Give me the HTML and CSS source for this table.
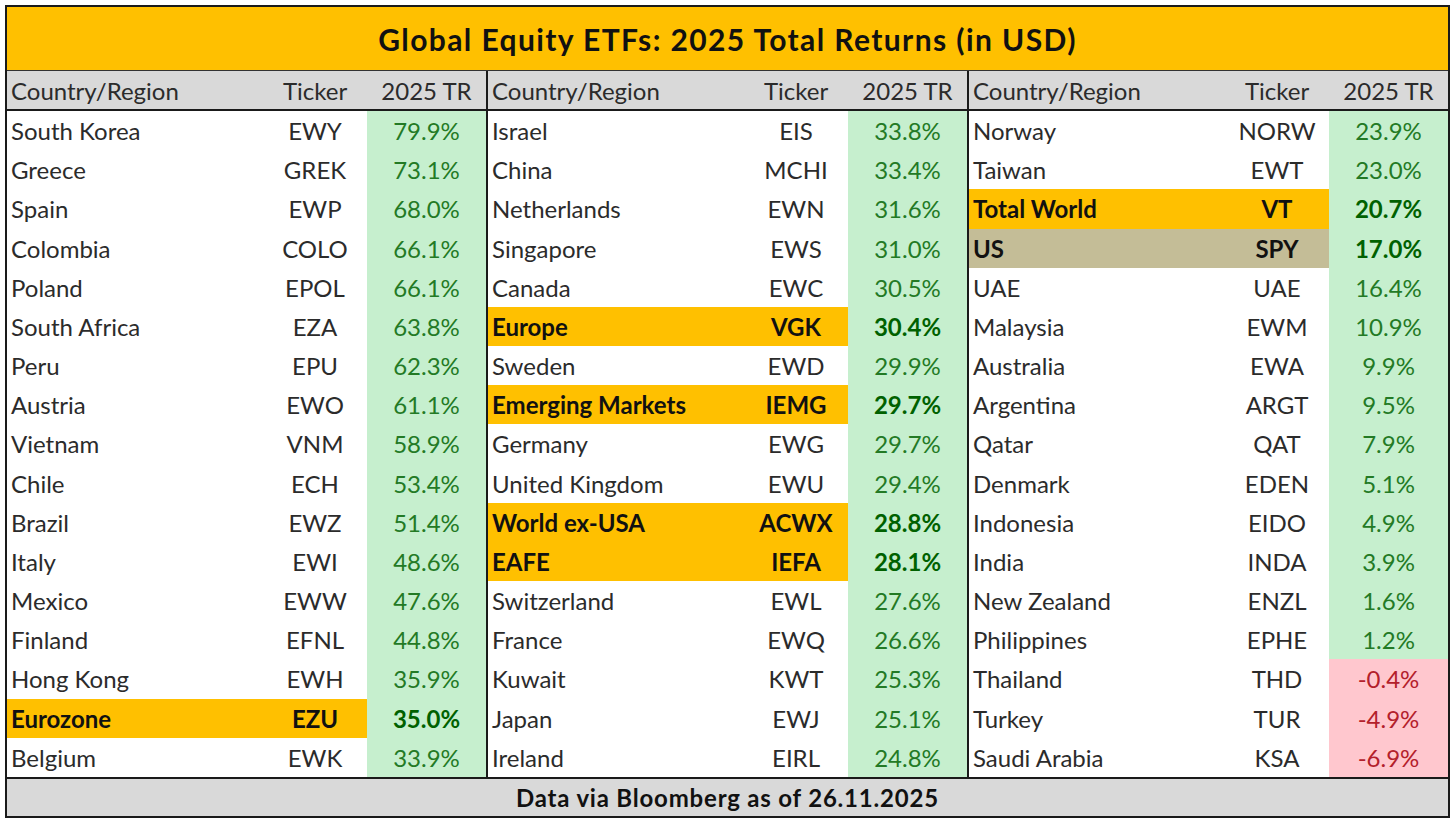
FILE: index.html
```html
<!DOCTYPE html>
<html>
<head>
<meta charset="utf-8">
<link rel="stylesheet" href="styles.css">
</head>
<body>
<div class="sheet">
  <div class="title">Global Equity ETFs: 2025 Total Returns (in USD)</div>
  <div class="cols">
    <div class="col">
      <div class="row head"><span class="name">Country/Region</span><span class="tic">Ticker</span><span class="tr">2025 TR</span></div>
      <div class="row"><span class="name">South Korea</span><span class="tic">EWY</span><span class="tr">79.9%</span></div>
      <div class="row"><span class="name">Greece</span><span class="tic">GREK</span><span class="tr">73.1%</span></div>
      <div class="row"><span class="name">Spain</span><span class="tic">EWP</span><span class="tr">68.0%</span></div>
      <div class="row"><span class="name">Colombia</span><span class="tic">COLO</span><span class="tr">66.1%</span></div>
      <div class="row"><span class="name">Poland</span><span class="tic">EPOL</span><span class="tr">66.1%</span></div>
      <div class="row"><span class="name">South Africa</span><span class="tic">EZA</span><span class="tr">63.8%</span></div>
      <div class="row"><span class="name">Peru</span><span class="tic">EPU</span><span class="tr">62.3%</span></div>
      <div class="row"><span class="name">Austria</span><span class="tic">EWO</span><span class="tr">61.1%</span></div>
      <div class="row"><span class="name">Vietnam</span><span class="tic">VNM</span><span class="tr">58.9%</span></div>
      <div class="row"><span class="name">Chile</span><span class="tic">ECH</span><span class="tr">53.4%</span></div>
      <div class="row"><span class="name">Brazil</span><span class="tic">EWZ</span><span class="tr">51.4%</span></div>
      <div class="row"><span class="name">Italy</span><span class="tic">EWI</span><span class="tr">48.6%</span></div>
      <div class="row"><span class="name">Mexico</span><span class="tic">EWW</span><span class="tr">47.6%</span></div>
      <div class="row"><span class="name">Finland</span><span class="tic">EFNL</span><span class="tr">44.8%</span></div>
      <div class="row"><span class="name">Hong Kong</span><span class="tic">EWH</span><span class="tr">35.9%</span></div>
      <div class="row hl"><span class="name">Eurozone</span><span class="tic">EZU</span><span class="tr">35.0%</span></div>
      <div class="row"><span class="name">Belgium</span><span class="tic">EWK</span><span class="tr">33.9%</span></div>
    </div>
    <div class="col">
      <div class="row head"><span class="name">Country/Region</span><span class="tic">Ticker</span><span class="tr">2025 TR</span></div>
      <div class="row"><span class="name">Israel</span><span class="tic">EIS</span><span class="tr">33.8%</span></div>
      <div class="row"><span class="name">China</span><span class="tic">MCHI</span><span class="tr">33.4%</span></div>
      <div class="row"><span class="name">Netherlands</span><span class="tic">EWN</span><span class="tr">31.6%</span></div>
      <div class="row"><span class="name">Singapore</span><span class="tic">EWS</span><span class="tr">31.0%</span></div>
      <div class="row"><span class="name">Canada</span><span class="tic">EWC</span><span class="tr">30.5%</span></div>
      <div class="row hl"><span class="name">Europe</span><span class="tic">VGK</span><span class="tr">30.4%</span></div>
      <div class="row"><span class="name">Sweden</span><span class="tic">EWD</span><span class="tr">29.9%</span></div>
      <div class="row hl"><span class="name">Emerging Markets</span><span class="tic">IEMG</span><span class="tr">29.7%</span></div>
      <div class="row"><span class="name">Germany</span><span class="tic">EWG</span><span class="tr">29.7%</span></div>
      <div class="row"><span class="name">United Kingdom</span><span class="tic">EWU</span><span class="tr">29.4%</span></div>
      <div class="row hl"><span class="name">World ex-USA</span><span class="tic">ACWX</span><span class="tr">28.8%</span></div>
      <div class="row hl"><span class="name">EAFE</span><span class="tic">IEFA</span><span class="tr">28.1%</span></div>
      <div class="row"><span class="name">Switzerland</span><span class="tic">EWL</span><span class="tr">27.6%</span></div>
      <div class="row"><span class="name">France</span><span class="tic">EWQ</span><span class="tr">26.6%</span></div>
      <div class="row"><span class="name">Kuwait</span><span class="tic">KWT</span><span class="tr">25.3%</span></div>
      <div class="row"><span class="name">Japan</span><span class="tic">EWJ</span><span class="tr">25.1%</span></div>
      <div class="row"><span class="name">Ireland</span><span class="tic">EIRL</span><span class="tr">24.8%</span></div>
    </div>
    <div class="col">
      <div class="row head"><span class="name">Country/Region</span><span class="tic">Ticker</span><span class="tr">2025 TR</span></div>
      <div class="row"><span class="name">Norway</span><span class="tic">NORW</span><span class="tr">23.9%</span></div>
      <div class="row"><span class="name">Taiwan</span><span class="tic">EWT</span><span class="tr">23.0%</span></div>
      <div class="row hl"><span class="name">Total World</span><span class="tic">VT</span><span class="tr">20.7%</span></div>
      <div class="row hl tan"><span class="name">US</span><span class="tic">SPY</span><span class="tr">17.0%</span></div>
      <div class="row"><span class="name">UAE</span><span class="tic">UAE</span><span class="tr">16.4%</span></div>
      <div class="row"><span class="name">Malaysia</span><span class="tic">EWM</span><span class="tr">10.9%</span></div>
      <div class="row"><span class="name">Australia</span><span class="tic">EWA</span><span class="tr">9.9%</span></div>
      <div class="row"><span class="name">Argentina</span><span class="tic">ARGT</span><span class="tr">9.5%</span></div>
      <div class="row"><span class="name">Qatar</span><span class="tic">QAT</span><span class="tr">7.9%</span></div>
      <div class="row"><span class="name">Denmark</span><span class="tic">EDEN</span><span class="tr">5.1%</span></div>
      <div class="row"><span class="name">Indonesia</span><span class="tic">EIDO</span><span class="tr">4.9%</span></div>
      <div class="row"><span class="name">India</span><span class="tic">INDA</span><span class="tr">3.9%</span></div>
      <div class="row"><span class="name">New Zealand</span><span class="tic">ENZL</span><span class="tr">1.6%</span></div>
      <div class="row"><span class="name">Philippines</span><span class="tic">EPHE</span><span class="tr">1.2%</span></div>
      <div class="row neg"><span class="name">Thailand</span><span class="tic">THD</span><span class="tr">-0.4%</span></div>
      <div class="row neg"><span class="name">Turkey</span><span class="tic">TUR</span><span class="tr">-4.9%</span></div>
      <div class="row neg"><span class="name">Saudi Arabia</span><span class="tic">KSA</span><span class="tr">-6.9%</span></div>
    </div>
  </div>
  <div class="footer">Data via Bloomberg as of 26.11.2025</div>
</div>
</body>
</html>
```
FILE: styles.css
```css
html, body {
  margin: 0;
  padding: 0;
  background: #ffffff;
}
body {
  font-family: Lato, "Open Sans", sans-serif;
  color: #2b2b2b;
}
.sheet {
  margin: 5px 0 0 5px;
  width: 1445px;
  height: 813px;
  box-sizing: border-box;
  border: 2px solid #1a1a1a;
  display: flex;
  flex-direction: column;
}
.title {
  height: 63px;
  flex: none;
  background: #ffc000;
  border-bottom: 1px solid #333;
  display: flex;
  align-items: center;
  justify-content: center;
  font-weight: 700;
  font-size: 30px;
  letter-spacing: 1.4px;
  color: #111;
}
.cols {
  flex: 1;
  display: flex;
}
.col {
  flex: 1;
  display: flex;
  flex-direction: column;
}
.col + .col {
  border-left: 2px solid #1a1a1a;
}
.row {
  flex: 1;
  display: grid;
  grid-template-columns: 1fr 104px 119px;
  font-size: 24px;
}
.row.head {
  flex: none;
  height: 38px;
  background: #d9d9d9;
  border-bottom: 2px solid #1a1a1a;
}
.row span {
  display: flex;
  align-items: center;
}
.name {
  padding-left: 4px;
}
.tic {
  justify-content: center;
}
.tr {
  justify-content: center;
  background: #c6efce;
  color: #237a25;
}
.head .tr {
  background: #d9d9d9;
  color: #2b2b2b;
}
.hl .name, .hl .tic {
  background: #ffc000;
  font-weight: 700;
  color: #111;
}
.hl .tr {
  font-weight: 700;
  color: #006100;
}
.tan .name, .tan .tic {
  background: #c4bd97;
}
.neg .tr {
  background: #ffc7ce;
  color: #b3202b;
}
.footer {
  height: 37px;
  flex: none;
  background: #d9d9d9;
  border-top: 2px solid #1a1a1a;
  display: flex;
  align-items: center;
  justify-content: center;
  font-weight: 700;
  font-size: 24px;
  letter-spacing: 0.8px;
  color: #111;
}
```
